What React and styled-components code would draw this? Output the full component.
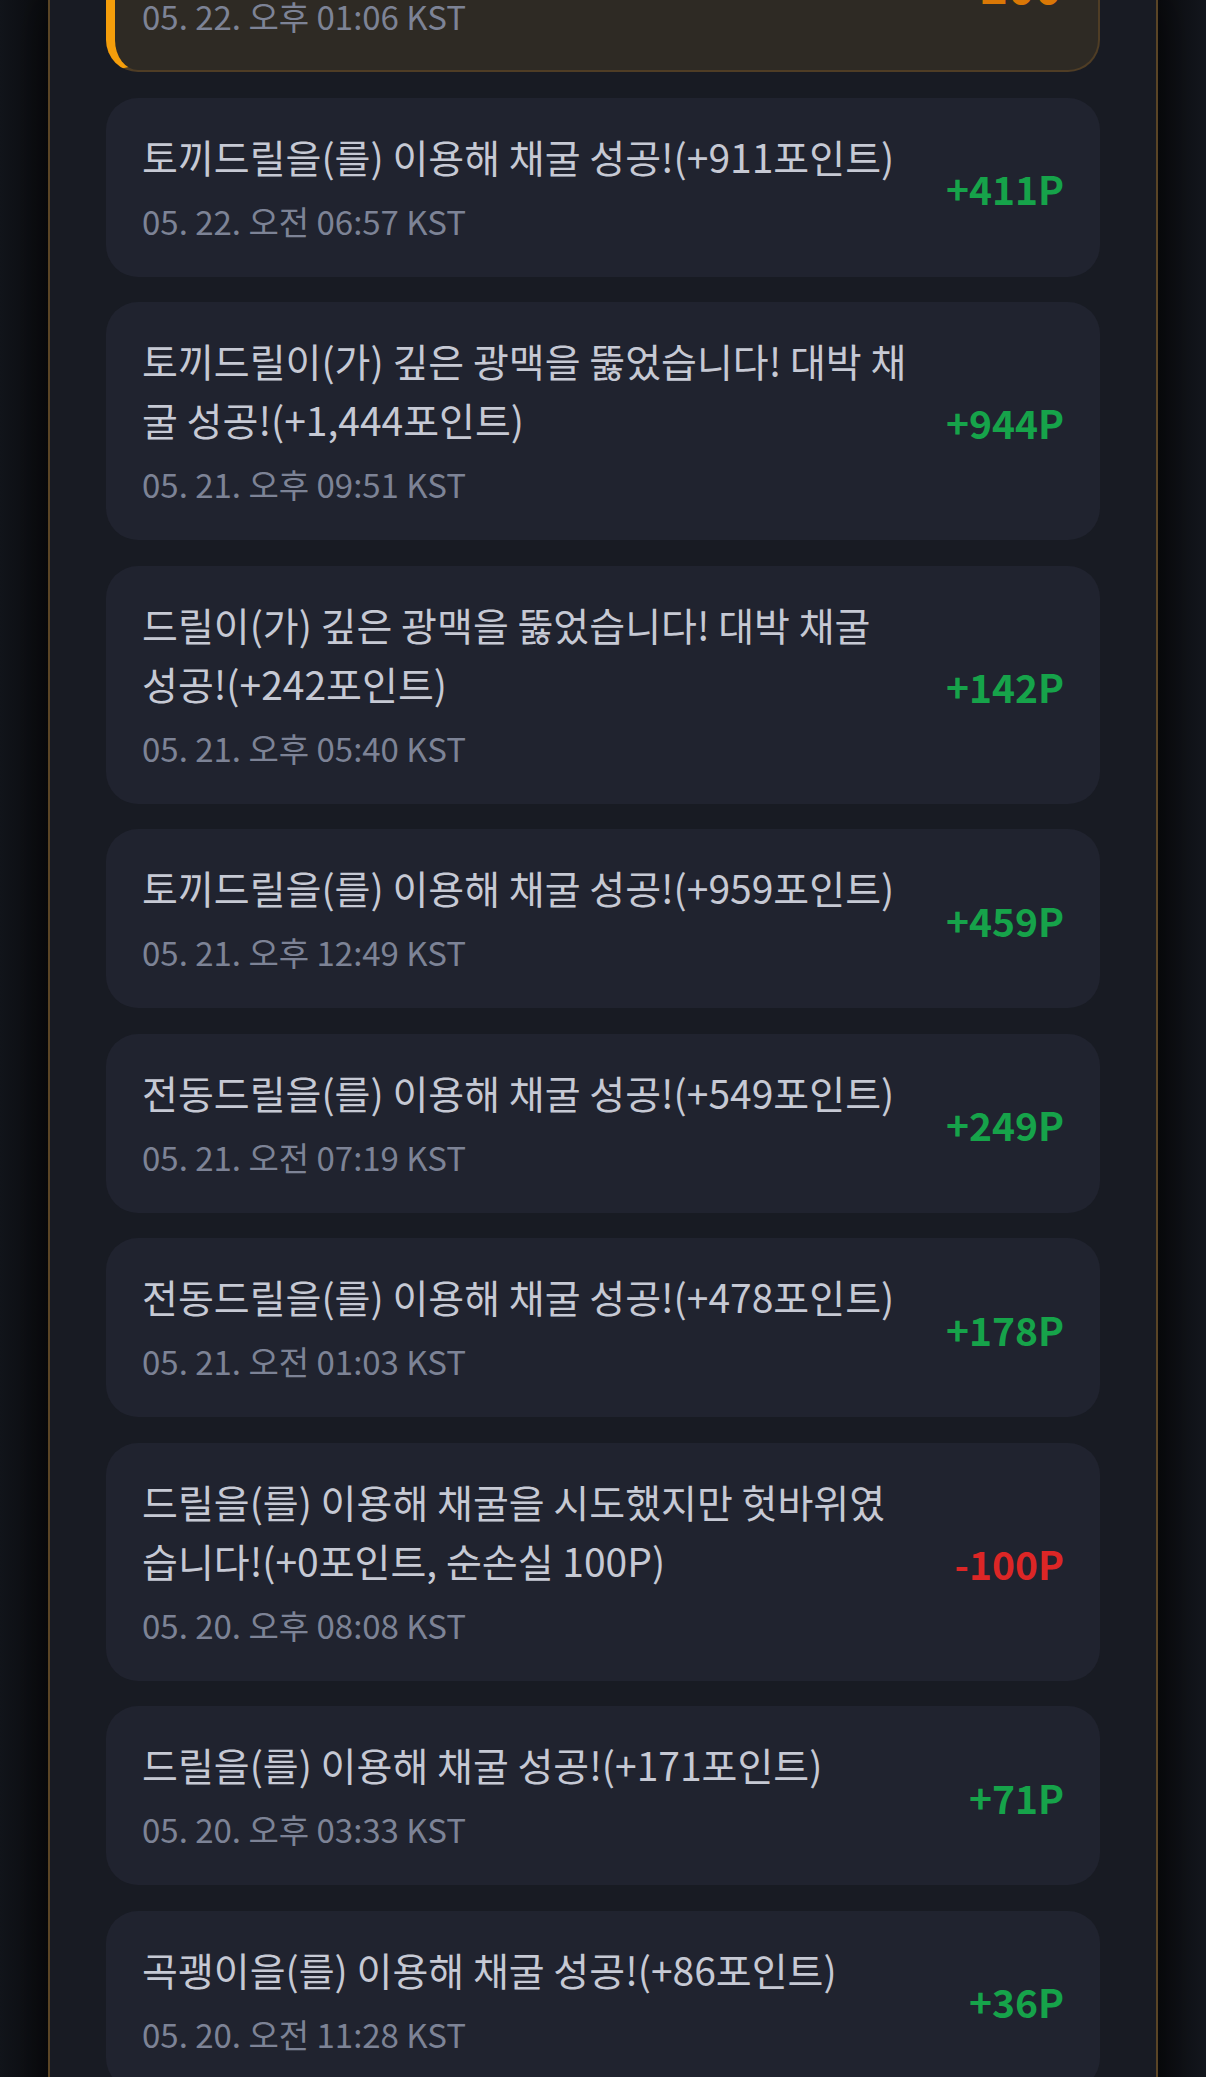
import React from 'react';
import styled, { createGlobalStyle, css } from 'styled-components';

const GlobalStyle = createGlobalStyle`
    html, body {
        margin: 0;
        padding: 0;
        background: #101217;
        overflow: hidden;
    }
    body {
        font-family: "Noto Sans CJK KR", "Noto Sans", sans-serif;
        -webkit-font-smoothing: antialiased;
    }
`;

const Page = styled.div`
    display: flex;
    justify-content: center;
    min-height: 2077px;
    padding: 0 48px;
    background: linear-gradient(90deg, #12151b 0%, #0a0b0e 4%, #0a0b0e 96%, #14171e 100%);
`;

const Panel = styled.section`
    box-sizing: border-box;
    width: 1110px;
    border-left: 2px solid #5a4526;
    border-right: 2px solid #5a4526;
    background: #181b23;
    padding: 0 56px 40px;
    box-shadow: 0 0 40px rgba(0, 0, 0, 0.5);
`;

// the list is scrolled: the first card is partly above the viewport
const List = styled.ul`
    list-style: none;
    margin: -107px 0 0;
    padding: 0;
    display: flex;
    flex-direction: column;
    gap: 25.5px;
`;

const Card = styled.li`
    box-sizing: border-box;
    display: flex;
    align-items: center;
    gap: 35px;
    padding: 29px 36px 33px;
    border-radius: 32px;
    background: #20232f;

    ${props => props.$highlight && css`
        background: #2e2a24;
        border: 2px solid rgba(180, 120, 40, 0.25);
        border-left: 9px solid #f59e0b;
        padding: 27px 36px 31px 27px;
    `}
`;

const Body = styled.div`
    flex: 1;
    min-width: 0;
`;

const Title = styled.p`
    margin: 0;
    font-size: 39px;
    line-height: 59px;
    color: #c6c9d4;
`;

const Time = styled.div`
    margin-top: 12px;
    font-size: 33px;
    line-height: 46px;
    color: #7d8396;
`;

const tone = {
    gain: '#16a34a',
    loss: '#dc2626',
    warn: '#d97706',
};

const Amount = styled.div`
    flex-shrink: 0;
    min-width: 117px;
    text-align: right;
    font-size: ${props => (props.$big ? '46px' : '39px')};
    font-weight: 700;
    color: ${props => tone[props.$tone]};
    padding-top: 6px;
`;

const entries = [
    { title: '다이아드릴이(가) 부서졌습니다! 드릴 수리 완료', time: '05. 22. 오후 01:06 KST', amount: '+200', tone: 'warn', highlight: true },
    { title: '토끼드릴을(를) 이용해 채굴 성공!(+911포인트)', time: '05. 22. 오전 06:57 KST', amount: '+411P', tone: 'gain' },
    { title: '토끼드릴이(가) 깊은 광맥을 뚫었습니다! 대박 채굴 성공!(+1,444포인트)', time: '05. 21. 오후 09:51 KST', amount: '+944P', tone: 'gain' },
    { title: '드릴이(가) 깊은 광맥을 뚫었습니다! 대박 채굴 성공!(+242포인트)', time: '05. 21. 오후 05:40 KST', amount: '+142P', tone: 'gain' },
    { title: '토끼드릴을(를) 이용해 채굴 성공!(+959포인트)', time: '05. 21. 오후 12:49 KST', amount: '+459P', tone: 'gain' },
    { title: '전동드릴을(를) 이용해 채굴 성공!(+549포인트)', time: '05. 21. 오전 07:19 KST', amount: '+249P', tone: 'gain' },
    { title: '전동드릴을(를) 이용해 채굴 성공!(+478포인트)', time: '05. 21. 오전 01:03 KST', amount: '+178P', tone: 'gain' },
    { title: '드릴을(를) 이용해 채굴을 시도했지만 헛바위였습니다!(+0포인트, 순손실 100P)', time: '05. 20. 오후 08:08 KST', amount: '-100P', tone: 'loss' },
    { title: '드릴을(를) 이용해 채굴 성공!(+171포인트)', time: '05. 20. 오후 03:33 KST', amount: '+71P', tone: 'gain' },
    { title: '곡괭이을(를) 이용해 채굴 성공!(+86포인트)', time: '05. 20. 오전 11:28 KST', amount: '+36P', tone: 'gain' },
];

export default function App() {
    return (
        <>
            <GlobalStyle />
            <Page>
                <Panel>
                    <List>
                        {entries.map((e, i) => (
                            <Card key={i} $highlight={e.highlight}>
                                <Body>
                                    <Title>{e.title}</Title>
                                    <Time>{e.time}</Time>
                                </Body>
                                <Amount $tone={e.tone} $big={e.highlight}>{e.amount}</Amount>
                            </Card>
                        ))}
                    </List>
                </Panel>
            </Page>
        </>
    );
}
